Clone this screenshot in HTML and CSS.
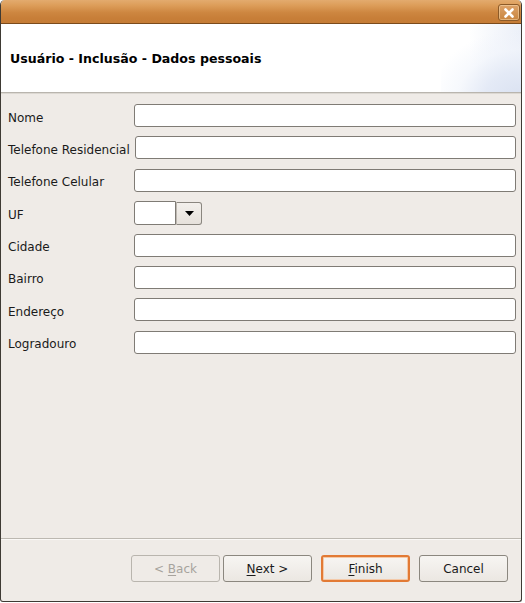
FILE: index.html
```html
<!DOCTYPE html>
<html>
<head>
<meta charset="utf-8">
<link rel="stylesheet" href="styles.css">
</head>
<body>
<div class="window">
  <div class="titlebar">
    <div class="close">
      <svg width="12" height="12" viewBox="0 0 12 12"><path d="M2.5 2.5 L9.5 9.5 M9.5 2.5 L2.5 9.5" stroke="#fff" stroke-width="2.6" stroke-linecap="round"/></svg>
    </div>
  </div>
  <div class="content">
    <div class="header">
      <h1 class="title">Usuário - Inclusão - Dados pessoais</h1>
      <div class="swoosh"></div>
    </div>
    <div class="form">
      <div class="row"><span class="label">Nome</span><div class="field"></div></div>
      <div class="row"><span class="label">Telefone Residencial</span><div class="field field-shift"></div></div>
      <div class="row"><span class="label">Telefone Celular</span><div class="field"></div></div>
      <div class="row"><span class="label">UF</span>
        <div class="combo"><div class="combo-text"></div><div class="combo-btn"><svg width="9" height="5" viewBox="0 0 9 5"><path d="M0 0 H9 L4.5 5 Z" fill="#000"/></svg></div></div>
      </div>
      <div class="row"><span class="label">Cidade</span><div class="field"></div></div>
      <div class="row"><span class="label">Bairro</span><div class="field"></div></div>
      <div class="row"><span class="label">Endereço</span><div class="field"></div></div>
      <div class="row"><span class="label">Logradouro</span><div class="field"></div></div>
    </div>
    <div class="footer">
      <div class="buttons">
        <button class="btn disabled">&lt; <u>B</u>ack</button>
        <button class="btn btn-next"><u>N</u>ext &gt;</button>
        <button class="btn focused"><u>F</u>inish</button>
        <button class="btn">Cancel</button>
      </div>
    </div>
  </div>
</div>
</body>
</html>
```

FILE: styles.css
```css
html, body {
  margin: 0;
  padding: 0;
  background: #ffffff;
}
body {
  width: 525px;
  height: 603px;
  font-family: "DejaVu Sans", "Liberation Sans", sans-serif;
  font-size: 12px;
  color: #1a1a1a;
}
.window {
  width: 520px;
  height: 601px;
  border: 1px solid #3e3a34;
  border-top: none;
  border-radius: 5px 5px 3px 3px;
  background: #efebe7;
  display: flex;
  flex-direction: column;
  overflow: hidden;
}
.titlebar {
  border-bottom: 1px solid #7b4b1c;
  background: linear-gradient(to bottom, #e3ab6e 0%, #dc9c58 25%, #cd8640 55%, #c77e38 80%, #c57c36 100%);
  display: flex;
  justify-content: flex-end;
  align-items: flex-start;
  padding: 4px 1px 0 0;
  box-sizing: border-box;
  height: 24px;
}
.close {
  width: 22px;
  height: 17px;
  box-sizing: border-box;
  border: 1px solid #8c5a28;
  border-radius: 3px;
  background: linear-gradient(to bottom, #dda268 0%, #c98640 100%);
  box-shadow: inset 0 0 0 1px rgba(255, 230, 190, 0.45);
  display: flex;
  align-items: center;
  justify-content: center;
}
.content {
  flex: 1;
  display: flex;
  flex-direction: column;
}
.header {
  position: relative;
  height: 68px;
  background: #ffffff;
  border-bottom: 1px solid #b9b5ae;
  box-shadow: 0 1px 0 #dcd8d2;
  display: flex;
  align-items: center;
  padding-left: 9px;
  overflow: hidden;
}
.title {
  margin: 0;
  font-size: 12.6px;
  font-weight: bold;
  color: #000;
  position: relative;
  z-index: 1;
}
.swoosh {
  position: absolute;
  right: 0;
  top: 0;
  width: 80px;
  height: 68px;
  background:
    radial-gradient(ellipse 90px 70px at 100% 110%, #d9e1f1 0%, #e4eaf6 40%, rgba(240, 244, 251, 0.6) 70%, rgba(255,255,255,0) 100%),
    radial-gradient(ellipse 60px 90px at 110% 20%, #e8edf7 0%, rgba(255,255,255,0) 100%);
}
.form {
  display: flex;
  flex-direction: column;
  gap: 9.4px;
  padding: 11px 5px 0 7px;
}
.row {
  display: flex;
  align-items: center;
  height: 23px;
}
.label {
  width: 126px;
  flex: none;
  white-space: nowrap;
  color: #1a1a1a;
  padding-top: 4px;
}
.field {
  flex: 1;
  height: 23px;
  box-sizing: border-box;
  background: #fff;
  border: 1px solid #7f7b75;
  border-radius: 3px;
}
.field-shift {
  margin-left: 1px;
}
.combo {
  display: flex;
  height: 24px;
}
.combo-text {
  width: 42px;
  box-sizing: border-box;
  background: #fff;
  border: 1px solid #7f7b75;
  border-radius: 3px 0 0 3px;
}
.combo-btn {
  width: 26px;
  box-sizing: border-box;
  border: 1px solid #8a867f;
  border-left: 1px solid #bdb8b1;
  border-radius: 0 3px 3px 0;
  background: linear-gradient(to bottom, #f3f0ec, #e6e1db);
  display: flex;
  align-items: center;
  justify-content: center;
  margin-top: 1px;
  height: 23px;
}
.footer {
  margin-top: auto;
  border-top: 1px solid #bcb8b1;
  box-shadow: inset 0 1px 0 #faf8f6;
  padding: 16px 0 19px 0;
}
.buttons {
  display: flex;
  justify-content: flex-end;
  padding-right: 13px;
}
.btn {
  width: 89px;
  height: 27px;
  box-sizing: border-box;
  font-family: "DejaVu Sans", "Liberation Sans", sans-serif;
  font-size: 12px;
  color: #1a1a1a;
  background: linear-gradient(to bottom, #f7f5f2, #ebe7e2);
  border: 1px solid #8b877f;
  border-radius: 3px;
  padding: 0;
  margin-left: 9px;
}
.btn.disabled {
  color: #a7a39d;
  border-color: #b9b5ae;
  background: #efebe7;
}
.btn-next {
  margin-left: 3px;
}
.btn.focused {
  border: 2px solid #e27a35;
  box-shadow: inset 0 0 0 1px #f4c9a8;
}
u {
  text-decoration-thickness: 1px;
  text-underline-offset: 2px;
}
```
